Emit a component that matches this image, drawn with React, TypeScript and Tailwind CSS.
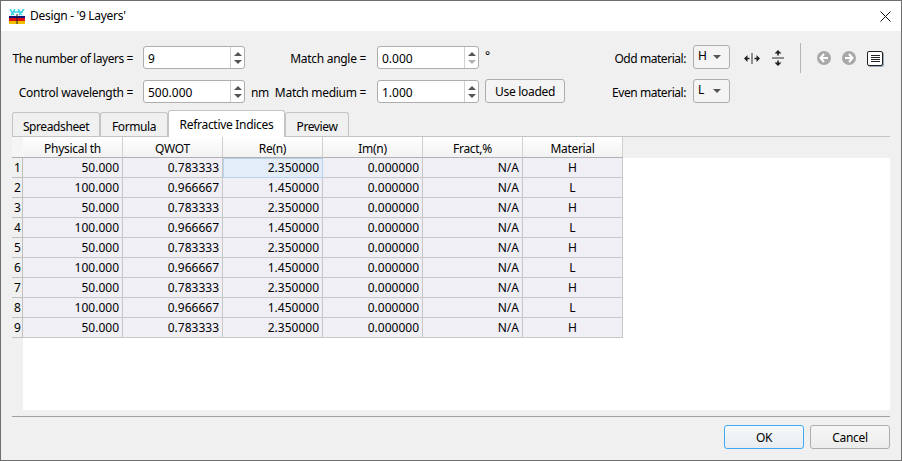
const rows = [
  ['50.000', '0.783333', '2.350000', 'H'],
  ['100.000', '0.966667', '1.450000', 'L'],
  ['50.000', '0.783333', '2.350000', 'H'],
  ['100.000', '0.966667', '1.450000', 'L'],
  ['50.000', '0.783333', '2.350000', 'H'],
  ['100.000', '0.966667', '1.450000', 'L'],
  ['50.000', '0.783333', '2.350000', 'H'],
  ['100.000', '0.966667', '1.450000', 'L'],
  ['50.000', '0.783333', '2.350000', 'H'],
]

const headers = ['Physical th', 'QWOT', 'Re(n)', 'Im(n)', 'Fract,%', 'Material']

function SpinBox({ value, downDisabled }: { value: string; downDisabled?: boolean }) {
  return (
    <div className="ml-[10px] flex h-[23px] w-[102px] rounded-[3px] border border-[#adadad] bg-white tracking-normal">
      <div className="flex-1 pl-[4px] leading-[24px]">{value}</div>
      <div className="flex w-[14px] flex-col items-center justify-center gap-[4px] border-l border-[#d0d0d0]">
        <svg width="8" height="4" viewBox="0 0 8 4"><path d="M4 0L8 4H0z" fill="#555" /></svg>
        <svg width="8" height="4" viewBox="0 0 8 4"><path d="M0 0h8L4 4z" fill={downDisabled ? '#b0b0b0' : '#555'} /></svg>
      </div>
    </div>
  )
}

function Combo({ value }: { value: string }) {
  return (
    <div className="-mt-px ml-[7px] flex h-[24px] w-[37px] items-center justify-between rounded-[3px] border border-[#adadad] bg-[#f4f4f4] pl-[4px] pr-[8px]">
      <span className="-mt-[3px]">{value}</span>
      <svg width="8" height="4" viewBox="0 0 8 4"><path d="M0 0h8L4 4z" fill="#555" /></svg>
    </div>
  )
}

function Tab({ label, width, active }: { label: string; width: string; active?: boolean }) {
  return active ? (
    <div className={`${width} relative z-10 -mb-px h-[27px] shrink-0 rounded-t-[3px] border border-b-0 border-[#c4c4c4] bg-white text-center leading-[28px]`}>
      {label}
    </div>
  ) : (
    <div className={`${width} h-[24px] shrink-0 rounded-t-[3px] border border-b-0 border-[#c4c4c4] bg-[#f0f0f0] text-center leading-[27px] tracking-[-0.4px]`}>
      {label}
    </div>
  )
}

export default function App() {
  return (
    <div className="flex h-[461px] w-[902px] flex-col border border-[#6e6e6e] bg-[#f0f0f0] text-[12px] tracking-[-0.3px] text-black [font-family:'Noto_Sans',sans-serif]">
      {/* Title bar */}
      <div className="flex h-[30px] shrink-0 items-center bg-white pl-[8px] pr-[10px]">
        <svg width="16" height="15" viewBox="0 0 16 15">
          <path d="M1 0l4 6M6 0L2 6M9 0l4 6M15 0l-5 6M2 3h12" stroke="#36d3e8" strokeWidth="1.4" fill="none" />
          <rect x="0" y="7" width="16" height="2" fill="#14147a" />
          <rect x="0" y="9" width="16" height="3" fill="#e01010" />
          <rect x="0" y="12" width="16" height="3" fill="#f0c000" />
          <path d="M8 5v10" stroke="#222" strokeWidth="1" />
        </svg>
        <span className="ml-[5px] leading-[30px]">Design - '9 Layers'</span>
        <svg className="ml-auto" width="11" height="11" viewBox="0 0 11 11">
          <path d="M0.5 0.5l10 10M10.5 0.5l-10 10" stroke="#111" strokeWidth="1" fill="none" />
        </svg>
      </div>

      {/* Parameters */}
      <div className="grid grid-cols-[121px_112px_122px_112px_207px_44px_1fr] grid-rows-[24px_24px] gap-y-[10px] whitespace-nowrap pl-[11px] pr-[11px] pt-[15px]">
        <div className="text-right leading-[26px] tracking-[-0.44px]">The number of layers =</div>
        <SpinBox value="9" />
        <div className="pr-px text-right leading-[26px]">Match angle =</div>
        <SpinBox value="0.000" downDisabled />
        <div className="flex justify-between pl-[6px] leading-[20px]">
          <span>°</span>
          <span className="leading-[26px] tracking-[-0.45px]">Odd material:</span>
        </div>
        <Combo value="H" />
        <div className="flex h-[24px] items-center">
          <svg className="ml-[14px]" width="16" height="11" viewBox="0 0 16 11">
            <path d="M8 0v11" stroke="#777" strokeWidth="1.6" fill="none" />
            <path d="M2 5.5h3.5M10.5 5.5H14" stroke="#222" strokeWidth="1.6" fill="none" />
            <path d="M0 5.5l3.5-3.5v7zM16 5.5L12.5 2v7z" fill="#222" />
          </svg>
          <svg className="ml-[12px]" width="12" height="16" viewBox="0 0 12 16">
            <path d="M0 8h12" stroke="#777" strokeWidth="1.6" fill="none" />
            <path d="M6 2v3.5M6 10.5V14" stroke="#222" strokeWidth="1.6" fill="none" />
            <path d="M6 0l3.5 3.5h-7zM6 16l-3.5-3.5h7z" fill="#222" />
          </svg>
          <div className="ml-[16px] h-[30px] w-px shrink-0 bg-[#b5b5b5]" />
          <div className="ml-[16px] flex h-[14px] w-[14px] shrink-0 items-center justify-center rounded-full bg-[#a8a8a8]">
            <svg width="10" height="10" viewBox="0 0 10 10"><path d="M5 1L1.5 5 5 9M2 5h7" stroke="#fff" strokeWidth="2" fill="none" /></svg>
          </div>
          <div className="ml-[11px] flex h-[14px] w-[14px] shrink-0 items-center justify-center rounded-full bg-[#a8a8a8]">
            <svg width="10" height="10" viewBox="0 0 10 10"><path d="M5 1l3.5 4L5 9M8 5H1" stroke="#fff" strokeWidth="2" fill="none" /></svg>
          </div>
          <div className="ml-[11px] flex h-[15px] w-[16px] shrink-0 flex-col items-center justify-center gap-[1px] rounded-[2px] border border-[#222] bg-white shadow-[1px_1px_0_#9ab]">
            <span className="h-px w-[9px] bg-[#222]" />
            <span className="h-px w-[9px] bg-[#222]" />
            <span className="h-px w-[9px] bg-[#222]" />
            <span className="h-px w-[9px] bg-[#222]" />
          </div>
        </div>

        <div className="text-right leading-[26px]">Control wavelength =</div>
        <SpinBox value="500.000" />
        <div className="flex justify-between pl-[6px] pr-px leading-[26px]">
          <span>nm</span>
          <span>Match medium =</span>
        </div>
        <SpinBox value="1.000" />
        <div className="flex justify-between pl-[6px]">
          <div className="-mt-px h-[24px] w-[80px] rounded-[3px] border border-[#adadad] bg-[#f4f4f4] text-center leading-[24px]">Use loaded</div>
          <span className="leading-[26px] tracking-[-0.45px]">Even material:</span>
        </div>
        <Combo value="L" />
        <div />
      </div>

      {/* Tabs */}
      <div className="mt-[6px] flex h-[26px] shrink-0 items-end pl-[11px]">
        <Tab label="Spreadsheet" width="w-[88px]" />
        <Tab label="Formula" width="w-[68px]" />
        <Tab label="Refractive Indices" width="w-[117px]" active />
        <Tab label="Preview" width="w-[64px]" />
      </div>

      {/* Tab pane */}
      <div className="mx-[11px] flex h-[274px] shrink-0 flex-col border-t border-[#c4c4c4]">
        <div className="flex h-[21px] shrink-0">
          <div className="w-[11px] border-b border-[#b0b0b0] bg-[#f5f5f5]" />
          {headers.map((h) => (
            <div key={h} className="w-[100px] border-b border-r border-b-[#b0b0b0] border-r-[#d0d0d0] bg-gradient-to-b from-white to-[#f2f2f2] text-center leading-[23px]">
              {h}
            </div>
          ))}
        </div>
        <div className="flex min-h-0 flex-1 flex-col tracking-normal">
          {rows.map((r, i) => (
            <div key={i} className="flex h-[20px] shrink-0">
              <div className="w-[11px] border-b border-r border-[#c0c0c0] bg-[#f0f0f0] pl-[2px] leading-[19px]">{i + 1}</div>
              <div className="w-[100px] border-b border-r border-[#c8c8c8] bg-[#f0eff6] pr-[3px] text-right leading-[19px]">{r[0]}</div>
              <div className="w-[100px] border-b border-r border-[#c8c8c8] bg-[#f0eff6] pr-[3px] text-right leading-[19px]">{r[1]}</div>
              <div className={`w-[100px] border-b border-r pr-[3px] text-right leading-[19px] ${i === 0 ? 'border-[#b9d3ec] bg-[#e3edf8] shadow-[inset_1px_1px_0_#b9d3ec]' : 'border-[#c8c8c8] bg-[#f0eff6]'}`}>{r[2]}</div>
              <div className="w-[100px] border-b border-r border-[#c8c8c8] bg-[#f0eff6] pr-[3px] text-right leading-[19px]">0.000000</div>
              <div className="w-[100px] border-b border-r border-[#c8c8c8] bg-[#f0eff6] pr-[3px] text-right leading-[19px]">N/A</div>
              <div className="w-[100px] border-b border-r border-[#c8c8c8] bg-[#f0eff6] text-center leading-[19px]">{r[3]}</div>
              <div className="flex-1 bg-white" />
            </div>
          ))}
          <div className="ml-[11px] flex-1 bg-white" />
        </div>
      </div>

      {/* Footer */}
      <div className="mx-[11px] mt-[6px] flex flex-1 flex-col border-t border-[#a0a0a0]">
        <div className="mt-[8px] flex justify-end gap-[6px]">
          <div className="h-[24px] w-[80px] rounded-[3px] border border-[#3fa9f5] bg-gradient-to-b from-[#f6f8fa] to-[#e8ecf0] text-center leading-[23px]">OK</div>
          <div className="h-[24px] w-[80px] rounded-[3px] border border-[#adadad] bg-gradient-to-b from-[#f6f6f6] to-[#ececec] text-center leading-[23px]">Cancel</div>
        </div>
      </div>
    </div>
  )
}
